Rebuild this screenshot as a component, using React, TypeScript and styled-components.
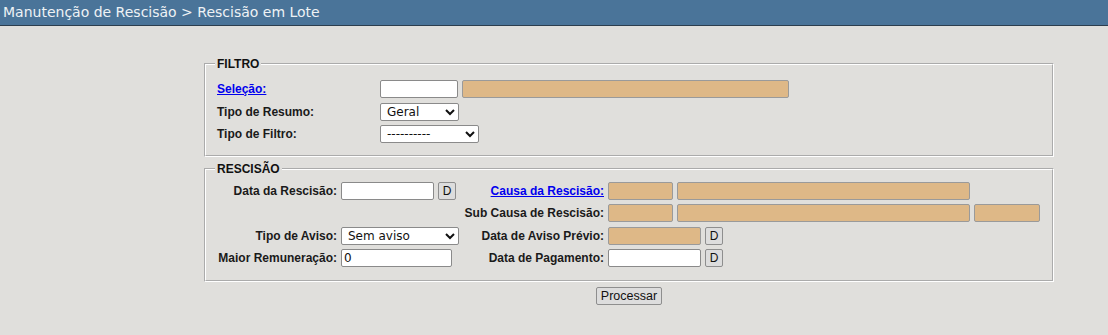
import React from 'react';
import styled, { createGlobalStyle } from 'styled-components';

const GlobalStyle = createGlobalStyle`
  html, body {
    margin: 0;
    padding: 0;
    background: #e0dfdc;
  }
  body {
    font-family: "Liberation Sans", Arial, sans-serif;
    font-size: 12px;
    color: #222;
  }
`;

const TitleBar = styled.div`
  height: 25px;
  background: #4a7499;
  border-bottom: 1px solid #2c3e4e;
  color: #eef2f5;
  font-family: "DejaVu Sans", sans-serif;
  font-size: 14px;
  line-height: 25px;
  padding-left: 3px;
  white-space: nowrap;
`;

const Content = styled.div`
  width: 850px;
  margin-left: 204px;
  padding-top: 31px;
`;

const FieldSet = styled.fieldset<{ $bottom: number }>`
  margin: 0 0 5px 0;
  padding: 4px 9px ${(p) => p.$bottom}px 9px;
  border: 2px groove #ffffff;
`;

const Legend = styled.legend`
  padding: 0 2px;
  font-weight: bold;
  font-size: 12px;
  line-height: 14px;
  color: #111;
`;

const FilterGrid = styled.div`
  display: grid;
  grid-template-columns: 163px 1fr;
  row-gap: 4.5px;
  align-items: center;
  padding: 5px 0 0 2px;
`;

const RescisaoGrid = styled.div`
  display: grid;
  grid-template-columns: 120px 119px 140px 1fr;
  column-gap: 4px;
  row-gap: 4.4px;
  align-items: center;
  padding: 2px 0 0 2px;
`;

const Label = styled.label<{ $right?: boolean }>`
  font-weight: bold;
  font-size: 12px;
  color: #1a1a1a;
  white-space: nowrap;
  text-align: ${(p) => (p.$right ? 'right' : 'left')};
`;

const LinkLabel = styled.a<{ $right?: boolean }>`
  font-weight: bold;
  font-size: 12px;
  color: #0000ee;
  text-decoration: underline;
  white-space: nowrap;
  justify-self: ${(p) => (p.$right ? 'end' : 'start')};
  cursor: pointer;
`;

const Cell = styled.div`
  display: flex;
  align-items: center;
  gap: 4px;
  height: 18px;
`;

const TextInput = styled.input<{ $w: number; $locked?: boolean }>`
  box-sizing: border-box;
  width: ${(p) => p.$w}px;
  height: 18px;
  margin: 0;
  padding: 0 2px;
  border: 1px solid ${(p) => (p.$locked ? '#9a9a9a' : '#8a8a8a')};
  border-radius: 2px;
  background: ${(p) => (p.$locked ? '#deb887' : '#ffffff')};
  font-family: "DejaVu Sans", sans-serif;
  font-size: 12px;
  color: #111;
`;

const Select = styled.select<{ $w: number }>`
  box-sizing: border-box;
  width: ${(p) => p.$w}px;
  height: 18px;
  margin: 0;
  padding: 0 0 0 2px;
  border: 1px solid #8a8a8a;
  border-radius: 2px;
  background: #ffffff;
  font-family: "DejaVu Sans", sans-serif;
  font-size: 12px;
  color: #111;
`;

const DateButton = styled.button`
  box-sizing: border-box;
  width: 18px;
  height: 18px;
  margin: 0;
  padding: 0;
  border: 1px solid #8e8e8e;
  border-radius: 2px;
  background: #dddddd;
  font-family: "Liberation Sans", Arial, sans-serif;
  font-size: 12px;
  color: #111;
`;

const Footer = styled.div`
  display: flex;
  justify-content: center;
`;

const SubmitButton = styled.button`
  box-sizing: border-box;
  height: 18px;
  padding: 0 4px;
  border: 1px solid #8e8e8e;
  border-radius: 2px;
  background: #dddddd;
  font-family: "Liberation Sans", Arial, sans-serif;
  font-size: 12.5px;
  color: #111;
`;

const Empty = styled.div``;

export default function App() {
  return (
    <>
      <GlobalStyle />
      <TitleBar>Manutenção de Rescisão &gt; Rescisão em Lote</TitleBar>
      <Content>
        <FieldSet $bottom={12}>
          <Legend>FILTRO</Legend>
          <FilterGrid>
            <LinkLabel>Seleção:</LinkLabel>
            <Cell>
              <TextInput $w={78} />
              <TextInput $w={327} $locked readOnly />
            </Cell>
            <Label>Tipo de Resumo:</Label>
            <Cell>
              <Select $w={79} defaultValue="geral">
                <option value="geral">Geral</option>
              </Select>
            </Cell>
            <Label>Tipo de Filtro:</Label>
            <Cell>
              <Select $w={99} defaultValue="none">
                <option value="none">----------</option>
              </Select>
            </Cell>
          </FilterGrid>
        </FieldSet>

        <FieldSet $bottom={13}>
          <Legend>RESCISÃO</Legend>
          <RescisaoGrid>
            <Label $right>Data da Rescisão:</Label>
            <Cell>
              <TextInput $w={93} />
              <DateButton>D</DateButton>
            </Cell>
            <LinkLabel $right>Causa da Rescisão:</LinkLabel>
            <Cell>
              <TextInput $w={65} $locked readOnly />
              <TextInput $w={293} $locked readOnly />
            </Cell>

            <Empty />
            <Empty />
            <Label $right>Sub Causa de Rescisão:</Label>
            <Cell>
              <TextInput $w={65} $locked readOnly />
              <TextInput $w={293} $locked readOnly />
              <TextInput $w={66} $locked readOnly />
            </Cell>

            <Label $right>Tipo de Aviso:</Label>
            <Cell>
              <Select $w={118} defaultValue="sem">
                <option value="sem">Sem aviso</option>
              </Select>
            </Cell>
            <Label $right>Data de Aviso Prévio:</Label>
            <Cell>
              <TextInput $w={93} $locked readOnly />
              <DateButton>D</DateButton>
            </Cell>

            <Label $right>Maior Remuneração:</Label>
            <Cell>
              <TextInput $w={111} defaultValue="0" />
            </Cell>
            <Label $right>Data de Pagamento:</Label>
            <Cell>
              <TextInput $w={93} />
              <DateButton>D</DateButton>
            </Cell>
          </RescisaoGrid>
        </FieldSet>

        <Footer>
          <SubmitButton>Processar</SubmitButton>
        </Footer>
      </Content>
    </>
  );
}
